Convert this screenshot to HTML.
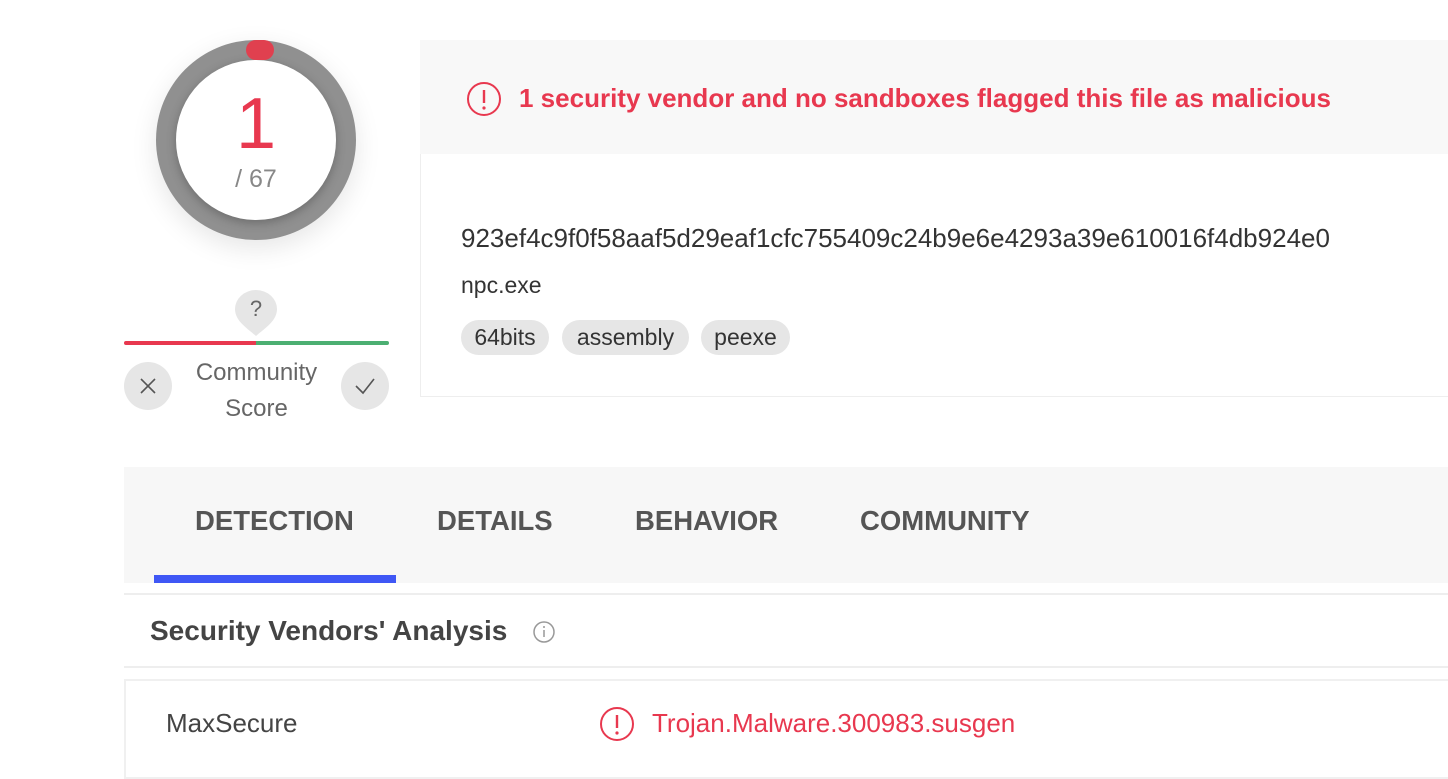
<!DOCTYPE html>
<html><head><style>
*{margin:0;padding:0;box-sizing:border-box}
body{width:1448px;height:760px;background:#fff;font-family:"Liberation Sans",sans-serif;position:relative;overflow:hidden;color:#444}
.a{position:absolute;white-space:nowrap}
</style></head><body>
<!-- ring -->
<div class="a" style="left:156px;top:40px;width:200px;height:200px;border-radius:50%;background:radial-gradient(circle,#909090 79%,#bdbdbd 88%,#d8d8d8 100%);box-shadow:0 8px 26px rgba(0,0,0,.10)"></div>
<div class="a" style="left:176px;top:60px;width:160px;height:160px;border-radius:50%;background:#fff;box-shadow:0 3px 10px rgba(0,0,0,.25)"></div>
<div class="a" style="left:246px;top:40px;width:28px;height:20px;border-radius:10px;background:#e0404f"></div>
<div class="a" style="left:176px;top:86px;width:160px;text-align:center;font-size:72px;color:#e8384f;line-height:76px">1</div>
<div class="a" style="left:176px;top:165px;width:160px;text-align:center;font-size:25px;color:#888">/ 67</div>
<!-- community -->
<svg class="a" style="left:235px;top:290px" width="42" height="48" viewBox="0 0 42 48"><path d="M21 46 C12 38 0 31 0 19 A21 19 0 0 1 42 19 C42 31 30 38 21 46Z" fill="#e6e6e6"/></svg>
<div class="a" style="left:235px;top:296px;width:42px;text-align:center;font-size:22px;color:#666">?</div>
<div class="a" style="left:124px;top:341px;width:132px;height:4px;background:#e8384f;border-radius:2px 0 0 2px"></div>
<div class="a" style="left:256px;top:341px;width:133px;height:4px;background:#4caf72;border-radius:0 2px 2px 0"></div>
<div class="a" style="left:124px;top:362px;width:48px;height:48px;border-radius:50%;background:#e6e6e6"></div>
<svg class="a" style="left:124px;top:362px" width="48" height="48"><path d="M17 17L31 31M31 17L17 31" stroke="#555" stroke-width="1.6"/></svg>
<div class="a" style="left:341px;top:362px;width:48px;height:48px;border-radius:50%;background:#e6e6e6"></div>
<svg class="a" style="left:341px;top:362px" width="48" height="48"><path d="M15 24L22 31L33 17" stroke="#555" stroke-width="1.6" fill="none"/></svg>
<div class="a" style="left:166px;top:355px;width:181px;text-align:center;font-size:24px;color:#666;line-height:36px;white-space:normal">Community<br>Score</div>
<!-- header box -->
<div class="a" style="left:420px;top:40px;width:1040px;height:357px;border:1px solid #eee;background:#fff"></div>
<div class="a" style="left:420px;top:40px;width:1040px;height:114px;background:#f8f8f8"></div>
<svg class="a" style="left:466px;top:81px" width="36" height="36"><circle cx="18" cy="18" r="16" fill="none" stroke="#e8384f" stroke-width="2"/><path d="M18 9V22" stroke="#e8384f" stroke-width="2.4"/><circle cx="18" cy="27" r="1.6" fill="#e8384f"/></svg>
<div class="a" style="left:519px;top:83px;font-size:26px;font-weight:bold;color:#e8384f;line-height:30px">1 security vendor and no sandboxes flagged this file as malicious</div>
<div class="a" style="left:461px;top:223px;font-size:26px;color:#333;line-height:30px">923ef4c9f0f58aaf5d29eaf1cfc755409c24b9e6e4293a39e610016f4db924e0</div>
<div class="a" style="left:461px;top:270px;font-size:23px;color:#333;line-height:30px">npc.exe</div>
<div class="a" style="left:461px;top:320px;height:35px;width:88px;text-align:center;border-radius:18px;background:#e6e6e6;font-size:23px;line-height:35px;color:#333">64bits</div>
<div class="a" style="left:562px;top:320px;height:35px;width:127px;text-align:center;border-radius:18px;background:#e6e6e6;font-size:23px;line-height:35px;color:#333">assembly</div>
<div class="a" style="left:701px;top:320px;height:35px;width:89px;text-align:center;border-radius:18px;background:#e6e6e6;font-size:23px;line-height:35px;color:#333">peexe</div>
<!-- tabs -->
<div class="a" style="left:124px;top:467px;width:1330px;height:116px;background:#f7f7f7"></div>
<div class="a" style="left:154px;top:575px;width:242px;height:8px;background:#3f57f5"></div>
<div class="a" style="left:195px;top:505px;font-size:27.5px;font-weight:bold;color:#555;line-height:32px">DETECTION</div>
<div class="a" style="left:437px;top:505px;font-size:27.5px;font-weight:bold;color:#555;line-height:32px">DETAILS</div>
<div class="a" style="left:635px;top:505px;font-size:27.5px;font-weight:bold;color:#555;line-height:32px">BEHAVIOR</div>
<div class="a" style="left:860px;top:505px;font-size:27.5px;font-weight:bold;color:#555;line-height:32px">COMMUNITY</div>
<div class="a" style="left:124px;top:593px;width:1330px;height:2px;background:#eee"></div>
<div class="a" style="left:150px;top:615px;font-size:28px;font-weight:bold;color:#444;line-height:32px">Security Vendors' Analysis</div>
<svg class="a" style="left:532px;top:620px" width="24" height="24"><circle cx="12" cy="12" r="10" fill="none" stroke="#999" stroke-width="1.5"/><path d="M12 10V17" stroke="#999" stroke-width="1.5"/><circle cx="12" cy="7" r="1" fill="#999"/></svg>
<div class="a" style="left:124px;top:666px;width:1330px;height:2px;background:#eee"></div>
<div class="a" style="left:124px;top:679px;width:1340px;height:100px;border:2px solid #f0f0f0;background:#fff"></div>
<div class="a" style="left:166px;top:708px;font-size:26px;color:#444;line-height:30px">MaxSecure</div>
<svg class="a" style="left:598px;top:705px" width="38" height="38"><circle cx="19" cy="19" r="16" fill="none" stroke="#e8384f" stroke-width="2"/><path d="M19 10V23" stroke="#e8384f" stroke-width="2.4"/><circle cx="19" cy="28" r="1.6" fill="#e8384f"/></svg>
<div class="a" style="left:652px;top:708px;font-size:26px;color:#e8384f;line-height:30px">Trojan.Malware.300983.susgen</div>
</body></html>
